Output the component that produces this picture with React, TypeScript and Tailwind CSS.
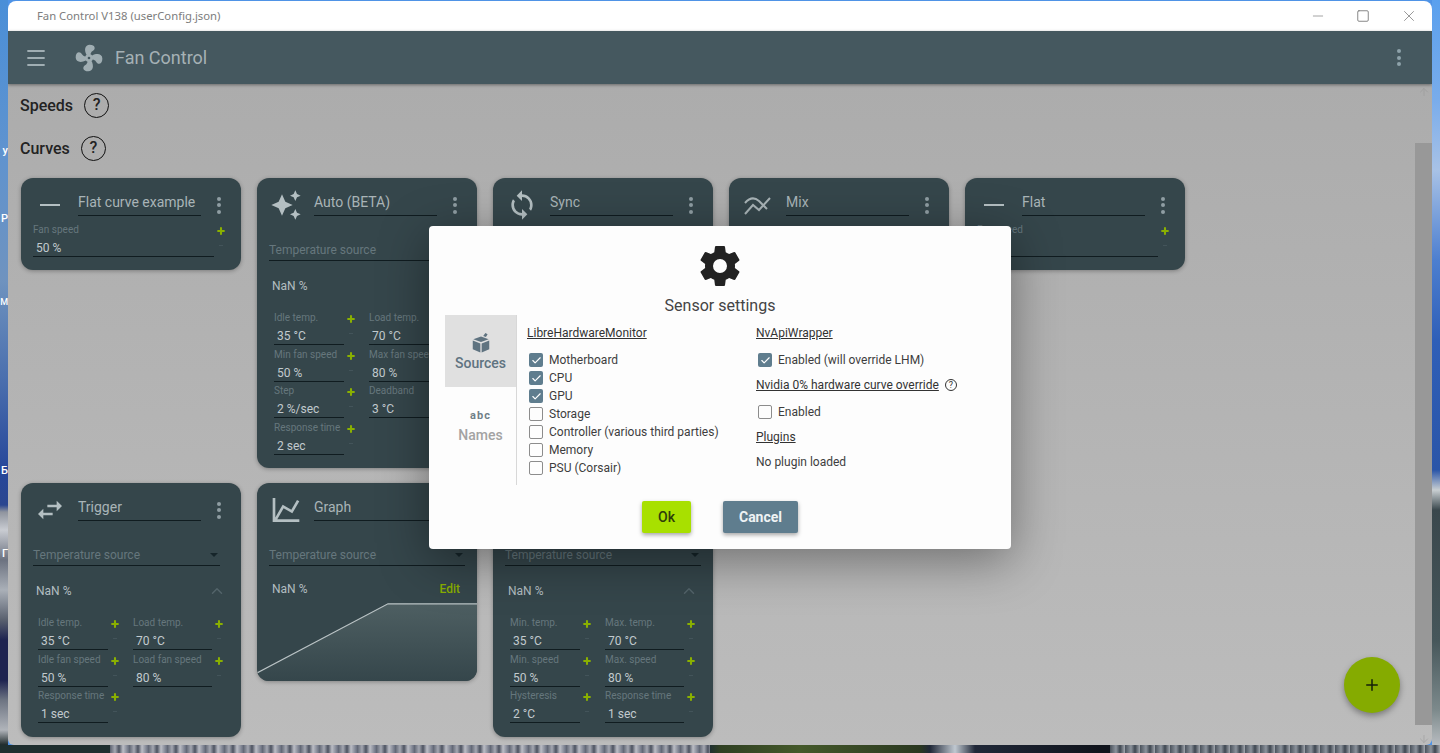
import React from 'react'
import { ArrowDown, ArrowUp, Check, ChevronUp, Menu, Minus, Plus, Square, X } from 'lucide-react'

const FAN =
  'M12,11A1,1 0 0,0 11,12A1,1 0 0,0 12,13A1,1 0 0,0 13,12A1,1 0 0,0 12,11M12.5,2C17,2 17.11,5.57 14.75,6.75C13.76,7.24 13.32,8.29 13.13,9.22C13.61,9.42 14.03,9.73 14.35,10.13C18.05,8.13 22.03,8.92 22.03,12.5C22.03,17 18.46,17.1 17.28,14.73C16.78,13.74 15.72,13.3 14.79,13.11C14.59,13.59 14.28,14 13.88,14.34C15.87,18.03 15.08,22 11.5,22C7,22 6.91,18.42 9.27,17.24C10.25,16.75 10.69,15.71 10.89,14.79C10.4,14.59 9.97,14.27 9.65,13.87C5.96,15.85 2,15.07 2,11.5C2,7 5.56,6.89 6.74,9.26C7.24,10.25 8.29,10.68 9.22,10.87C9.41,10.39 9.73,9.97 10.14,9.65C8.15,5.96 8.94,2 12.5,2Z'
const SPARKLES =
  'M19,1L17.74,3.75L15,5L17.74,6.26L19,9L20.25,6.26L23,5L20.25,3.75M9,4L6.5,9.5L1,12L6.5,14.5L9,20L11.5,14.5L17,12L11.5,9.5M19,15L17.74,17.74L15,19L17.74,20.25L19,23L20.25,20.25L23,19L20.25,17.74'
const SYNC =
  'M12,18A6,6 0 0,1 6,12C6,11 6.25,10.03 6.7,9.2L5.24,7.74C4.46,8.97 4,10.43 4,12A8,8 0 0,0 12,20V23L16,19L12,15M12,4V1L8,5L12,9V6A6,6 0 0,1 18,12C18,13 17.75,13.97 17.3,14.8L18.76,16.26C19.54,15.03 20,13.57 20,12A8,8 0 0,0 12,4Z'
const SWAP = 'M21,9L17,5V8H10V10H17V13M7,11L3,15L7,19V16H14V14H7V11Z'
const CHART = 'M16,11.78L20.24,4.45L21.97,5.45L16.74,14.5L10.23,10.75L5.46,19H22V21H2V3H4V17.54L9.5,8L16,11.78Z'
const GEAR =
  'M12,15.5A3.5,3.5 0 0,1 8.5,12A3.5,3.5 0 0,1 12,8.5A3.5,3.5 0 0,1 15.5,12A3.5,3.5 0 0,1 12,15.5M19.43,12.97C19.47,12.65 19.5,12.33 19.5,12C19.5,11.67 19.47,11.34 19.43,11L21.54,9.37C21.73,9.22 21.78,8.95 21.66,8.73L19.66,5.27C19.54,5.05 19.27,4.96 19.05,5.05L16.56,6.05C16.04,5.66 15.5,5.32 14.87,5.07L14.5,2.42C14.46,2.18 14.25,2 14,2H10C9.75,2 9.54,2.18 9.5,2.42L9.13,5.07C8.5,5.32 7.96,5.66 7.44,6.05L4.95,5.05C4.73,4.96 4.46,5.05 4.34,5.27L2.34,8.73C2.21,8.95 2.27,9.22 2.46,9.37L4.57,11C4.53,11.34 4.5,11.67 4.5,12C4.5,12.33 4.53,12.65 4.57,12.97L2.46,14.63C2.27,14.78 2.21,15.05 2.34,15.27L4.34,18.73C4.46,18.95 4.73,19.03 4.95,18.95L7.44,17.94C7.96,18.34 8.5,18.68 9.13,18.93L9.5,21.58C9.54,21.82 9.75,22 10,22H14C14.25,22 14.46,21.82 14.5,21.58L14.87,18.93C15.5,18.67 16.04,18.34 16.56,17.94L19.05,18.95C19.27,19.03 19.54,18.95 19.66,18.73L21.66,15.27C21.78,15.05 21.73,14.78 21.54,14.63L19.43,12.97Z'

const Mdi = ({ d, className }: { d: string; className: string }) => (
  <svg viewBox="0 0 24 24" className={className} fill="currentColor">
    <path d={d} />
  </svg>
)

const Kebab = ({ className }: { className: string }) => (
  <div className={`flex flex-col gap-[2.5px] ${className}`}>
    <span className="w-[4px] h-[4px] rounded-full bg-current" />
    <span className="w-[4px] h-[4px] rounded-full bg-current" />
    <span className="w-[4px] h-[4px] rounded-full bg-current" />
  </div>
)

const FlatIcon = () => <div className="w-[20px] h-[2.5px] bg-[#b4bfc2]" />

const MixIcon = () => (
  <svg viewBox="0 0 30 22" className="w-[30px] h-[22px] text-[#a9b4b7]" fill="none" stroke="currentColor" strokeWidth="2">
    <path d="M2 9 Q9 1 16 7 L24 15" />
    <path d="M2 20 L10 11 L16 16 L27 4" />
  </svg>
)

const Card = ({
  icon,
  title,
  children,
}: {
  icon: React.ReactNode
  title: string
  children: React.ReactNode
}) => (
  <div className="w-[220px] rounded-[12px] bg-[#35464b] shadow-[0_1px_4px_rgba(0,0,0,0.3)] overflow-hidden">
    <div className="flex items-start h-[46px]">
      <div className="w-[57px] h-[54px] flex items-center justify-center text-[#b4bfc2]">{icon}</div>
      <div className="w-[123px] h-[38px] pt-[14px] border-b border-[#101c20] text-[14px] leading-[20px] text-[#a9b4b7] whitespace-nowrap">
        {title}
      </div>
      <div className="w-[36px] h-[54px] flex items-center justify-center text-[#8f9ea3]">
        <Kebab className="" />
      </div>
    </div>
    {children}
  </div>
)

const Field = ({ label, value, wide, full }: { label: string; value: string; wide?: boolean; full?: boolean }) => (
  <div className="flex h-[36.5px]">
    <div className={full ? 'w-[181px]' : wide ? 'w-[79px]' : 'w-[70px]'}>
      <div className="h-[12px] text-[10px] leading-[12px] text-[#66777d] whitespace-nowrap">{label}</div>
      <div className="h-[21px] pt-[4px] pl-[3px] border-b border-[#101c20] text-[12px] leading-[16px] text-[#c2cace] whitespace-nowrap">
        {value}
      </div>
    </div>
    <div className="w-[14px] flex flex-col items-center">
      <Plus className="w-[10px] h-[10px] mt-[2px] text-[#8ab000]" strokeWidth={5} />
      <span className="mt-[9px] w-[4px] h-px bg-[#43545a]" />
    </div>
  </div>
)

const Select = ({ narrow }: { narrow?: boolean }) => (
  <div className={`ml-[12px] mt-[16px] h-[21px] border-b border-[#101c20] flex items-center justify-between text-[12px] text-[#66777d] ${narrow ? 'mr-[21px]' : 'mr-[12px]'}`}>
    <span>Temperature source</span>
    <span className="mr-[2px] w-0 h-0 border-x-[4px] border-x-transparent border-t-[4px] border-t-[#16252a]" />
  </div>
)

const NanRow = ({ chevron = true }: { chevron?: boolean }) => (
  <div className="mx-[15px] h-[51px] pb-[2px] flex items-center justify-between text-[12px] text-[#b3bdc1]">
    <span>NaN %</span>
    {chevron && <ChevronUp className="w-[18px] h-[18px] text-[#526369]" />}
  </div>
)

const Fields = ({ items }: { items: [string, string][] }) => (
  <div className="ml-[17px] pb-[10px] grid grid-cols-[95px_96px]">
    {items.map(([label, value], i) => (
      <Field key={label} label={label} value={value} wide={i % 2 === 1} />
    ))}
  </div>
)

const Checkbox = ({ label, checked }: { label: string; checked?: boolean }) => (
  <div className="flex items-center h-[18px] ml-[2px] gap-[6px] text-[12px] text-[#3d3d3d]">
    {checked ? (
      <span className="w-[14px] h-[14px] rounded-[2px] bg-[#5f7d8e] flex items-center justify-center">
        <Check className="w-[11px] h-[11px] text-white" strokeWidth={2.5} />
      </span>
    ) : (
      <span className="w-[14px] h-[14px] rounded-[2px] border-[1.5px] border-[#8c8c8c]" />
    )}
    <span>{label}</span>
  </div>
)

const Heading = ({ children, className = '' }: { children: React.ReactNode; className?: string }) => (
  <div className={`h-[16px] text-[12px] leading-[16px] text-[#333] underline ${className}`}>{children}</div>
)

const Dialog = () => (
  <div className="absolute left-[429px] top-[226px] w-[582px] h-[323px] rounded-[4px] bg-[#fdfdfd] shadow-[0_11px_50px_rgba(0,0,0,0.4)] flex flex-col items-center pt-[16px]">
    <Mdi d={GEAR} className="w-[48px] h-[48px] text-[#222]" />
    <div className="mt-[6px] -mb-[1px] h-[20px] text-[16px] leading-[20px] text-[#444]">Sensor settings</div>
    <div className="w-full h-[170px] px-[16px] flex">
      <div className="w-[72px] border-r border-[#d8d8d8]">
        <div className="h-[72px] bg-[#e0e0e0] flex flex-col items-center pt-[17px] text-[#5f7380]">
          <svg viewBox="0 0 20 20" className="w-[22px] h-[22px]" fill="currentColor">
            <path d="M10 4 L17 6.5 L10 9.2 L3 6.5 Z M14 1 L16 2 L14.5 4.5 L12 3.6 Z" />
            <path d="M2.5 7.8 L9.4 10.4 L9.4 18.6 L2.5 15.6 Z M17.5 7.8 L10.6 10.4 L10.6 18.6 L17.5 15.6 Z" />
          </svg>
          <div className="-mt-[1px] text-[14px] leading-[20px] font-medium">Sources</div>
        </div>
        <div className="flex flex-col items-center pt-[18px] text-[#a3a3a3]">
          <div className="h-[20px] pt-[1px] text-[11px] leading-[20px] font-bold tracking-[1px] text-[#707f88]">abc</div>
          <div className="text-[14px] leading-[20px] font-medium">Names</div>
        </div>
      </div>
      <div className="w-[239px] pl-[10px] pt-[10px]">
        <Heading>LibreHardwareMonitor</Heading>
        <div className="mt-[10px]">
          <Checkbox label="Motherboard" checked />
          <Checkbox label="CPU" checked />
          <Checkbox label="GPU" checked />
          <Checkbox label="Storage" />
          <Checkbox label="Controller (various third parties)" />
          <Checkbox label="Memory" />
          <Checkbox label="PSU (Corsair)" />
        </div>
      </div>
      <div className="flex-1 pt-[10px]">
        <Heading>NvApiWrapper</Heading>
        <div className="mt-[10px]">
          <Checkbox label="Enabled (will override LHM)" checked />
        </div>
        <div className="mt-[8px] flex items-center gap-[6px]">
          <Heading>Nvidia 0% hardware curve override</Heading>
          <span className="w-[12px] h-[12px] rounded-full border border-[#333] text-[9px] leading-[10px] text-center text-[#333]">?</span>
        </div>
        <div className="mt-[10px]">
          <Checkbox label="Enabled" />
        </div>
        <Heading className="mt-[8px]">Plugins</Heading>
        <div className="mt-[9px] h-[16px] text-[12px] leading-[16px] text-[#3d3d3d]">No plugin loaded</div>
      </div>
    </div>
    <div className="mt-[16px] flex gap-[32px]">
      <div className="w-[49px] h-[32px] rounded-[2px] bg-[#a8e000] shadow-[0_2px_4px_rgba(0,0,0,0.35)] flex items-center justify-center text-[14px] font-medium text-[#2f3d0a]">
        Ok
      </div>
      <div className="w-[75px] h-[32px] rounded-[2px] bg-[#5f7d8e] shadow-[0_2px_4px_rgba(0,0,0,0.35)] flex items-center justify-center text-[14px] font-bold text-[#eef2f4]">
        Cancel
      </div>
    </div>
  </div>
)

const SectionTitle = ({ title, className }: { title: string; className: string }) => (
  <div className={`h-[26px] flex items-center text-[#232323] ${className}`}>
    <span className="mt-[2px] text-[16px] font-medium">{title}</span>
    <span className="ml-[11px] w-[25px] h-[25px] rounded-full border-[1.5px] border-[#111] flex items-center justify-center text-[16px] font-medium">?</span>
  </div>
)

// desktop icon labels that stick out left of the window
const DesktopLabel = ({ text, className }: { text: string; className: string }) => (
  <span className={`absolute left-0 w-[8px] text-right leading-[12px] font-medium text-white ${className}`}>{text}</span>
)

export default function App() {
  return (
    <div className="relative w-[1440px] h-[753px] overflow-hidden pl-[8px] pt-[1px] [font-family:Roboto,sans-serif] [background:repeating-linear-gradient(90deg,#5c6270_0,#a5a8b2_5px,#4c5260_9px,#bcbec6_13px,#6a7080_19px)_110px_745px/600px_8px_no-repeat,repeating-linear-gradient(90deg,#4a525c_0,#8c939c_6px,#3e4650_10px,#a4a9b0_15px)_1110px_745px/330px_8px_no-repeat,linear-gradient(90deg,#1f2f30_0,#1f2f30_710px,#2f3f22_720px,#44592a_800px,#2a3820_920px,#202838_930px,#c0c8d0_955px,#202838_975px,#10141c_1100px)_left_745px/100%_8px_no-repeat,linear-gradient(to_bottom,#4a8fd8_0,#5f93cf_150px,#6f93bf_280px,#4a6fae_380px,#27479a_470px,#2a4690_505px,#8f949e_512px,#c9ccd2_530px,#6c7280_560px,#aab0b8_590px,#59606e_620px,#1e2350_640px,#1e2350_680px,#6d7482_700px,#b0b4ba_730px,#1f2a2c_745px)_left_top/8px_100%_no-repeat,linear-gradient(to_bottom,#5aa0ee_0,#79aceb_100px,#a8c2e6_170px,#4d7fd0_260px,#2f5fb8_340px,#2a55a8_470px,#c9cfd2_490px,#3a474c_510px,#46565a_640px,#7d8a8c_710px,#b8bcc0_745px)_right_top/8px_100%_no-repeat,#4f93e6]">
      <DesktopLabel text="у" className="top-[145px] text-[11px]" />
      <DesktopLabel text="Р" className="top-[213px] text-[11px]" />
      <DesktopLabel text="М" className="top-[296px] text-[9px]" />
      <DesktopLabel text="Б" className="top-[465px] text-[11px]" />
      <DesktopLabel text="Г" className="top-[548px] text-[11px]" />
      <div className="w-[1424px] h-[744px] rounded-t-[8px] rounded-b-[6px] overflow-hidden flex flex-col">
        <div className="h-[30px] shrink-0 bg-white flex items-center pl-[29px]">
          <span className="[font-family:'Noto_Sans',sans-serif] text-[11.3px] text-[#7d7d7d]">Fan Control V138 (userConfig.json)</span>
          <div className="ml-auto flex items-center text-[#777]">
            <Minus className="w-[16px] h-[16px] mr-[30px]" strokeWidth={1} />
            <Square className="w-[14px] h-[14px] mr-[30px]" strokeWidth={1.5} />
            <X className="w-[18px] h-[18px] mr-[14px]" strokeWidth={1} />
          </div>
        </div>
        <div className="h-[53px] shrink-0 bg-[#45585f] shadow-[0_1px_3px_rgba(0,0,0,0.4)] z-10 flex items-center text-[#a0aeb3]">
          <Menu className="ml-[16px] w-[24px] h-[24px] mt-[1px]" strokeWidth={1.8} />
          <Mdi d={FAN} className="ml-[25px] w-[32px] h-[32px]" />
          <span className="ml-[10px] text-[18px] text-[#a5b1b5]">Fan Control</span>
          <Kebab className="ml-auto mr-[31px] text-[#8ea2aa]" />
        </div>
        <div className="flex-1 flex min-h-0 bg-gradient-to-b from-[#acacac] to-[#bcbcbc]">
          <div className="relative w-[1407px] pl-[12px] overflow-hidden">
            <SectionTitle title="Speeds" className="mt-[8px]" />
            <SectionTitle title="Curves" className="mt-[17px]" />
            <div className="mt-[17px] ml-[1px] flex flex-col gap-[15px]">
              <div className="h-[290px] flex items-start gap-[16px]">
                <Card icon={<FlatIcon />} title="Flat curve example">
                  <div className="ml-[12px] h-[46px]">
                    <Field label="Fan speed" value="50 %" full />
                  </div>
                </Card>
                <Card icon={<Mdi d={SPARKLES} className="w-[32px] h-[32px]" />} title="Auto (BETA)">
                  <Select />
                  <NanRow chevron={false} />
                  <Fields
                    items={[
                      ['Idle temp.', '35 °C'],
                      ['Load temp.', '70 °C'],
                      ['Min fan speed', '50 %'],
                      ['Max fan speed', '80 %'],
                      ['Step', '2 %/sec'],
                      ['Deadband', '3 °C'],
                      ['Response time', '2 sec'],
                    ]}
                  />
                </Card>
                <Card icon={<Mdi d={SYNC} className="w-[32px] h-[32px]" />} title="Sync">
                  <Select />
                </Card>
                <Card icon={<MixIcon />} title="Mix">
                  <Select />
                </Card>
                <Card icon={<FlatIcon />} title="Flat">
                  <div className="ml-[12px] h-[46px]">
                    <Field label="Fan speed" value="50 %" full />
                  </div>
                </Card>
              </div>
              <div className="flex items-start gap-[16px]">
                <Card icon={<Mdi d={SWAP} className="w-[32px] h-[32px]" />} title="Trigger">
                  <Select narrow />
                  <NanRow />
                  <Fields
                    items={[
                      ['Idle temp.', '35 °C'],
                      ['Load temp.', '70 °C'],
                      ['Idle fan speed', '50 %'],
                      ['Load fan speed', '80 %'],
                      ['Response time', '1 sec'],
                    ]}
                  />
                </Card>
                <Card icon={<Mdi d={CHART} className="w-[32px] h-[32px]" />} title="Graph">
                  <Select />
                  <div className="mx-[15px] h-[37px] pt-[15px] flex justify-between text-[12px] leading-[16px]">
                    <span className="text-[#b3bdc1]">NaN %</span>
                    <span className="mr-[2px] text-[#8ab000] font-medium">Edit</span>
                  </div>
                  <svg viewBox="0 0 220 78" className="block w-[220px] h-[78px]">
                    <defs>
                      <linearGradient id="graphFill" x1="0" y1="0" x2="0" y2="1">
                        <stop offset="0" stopColor="#4e5f62" />
                        <stop offset="1" stopColor="#35464b" />
                      </linearGradient>
                    </defs>
                    <path d="M0 70 L131 0.8 L220 0.8 V78 H0 Z" fill="url(#graphFill)" />
                    <path d="M0 70 L131 0.8 L220 0.8" fill="none" stroke="#b9c2c4" strokeWidth="1.2" />
                  </svg>
                </Card>
                <Card icon={<Mdi d={CHART} className="w-[32px] h-[32px]" />} title="Linear">
                  <Select />
                  <NanRow />
                  <Fields
                    items={[
                      ['Min. temp.', '35 °C'],
                      ['Max. temp.', '70 °C'],
                      ['Min. speed', '50 %'],
                      ['Max. speed', '80 %'],
                      ['Hysteresis', '2 °C'],
                      ['Response time', '1 sec'],
                    ]}
                  />
                </Card>
              </div>
            </div>
            <div className="absolute left-[1336px] top-[573px] w-[56px] h-[56px] rounded-full bg-[#85ab00] shadow-[0_3px_6px_rgba(0,0,0,0.35)] flex items-center justify-center">
              <Plus className="w-[18px] h-[18px] text-[#14210a]" strokeWidth={2} />
            </div>
          </div>
          <div className="w-[17px] flex flex-col items-center">
            <div className="h-[59px] w-full pt-[2px] flex justify-center">
              <ArrowUp className="w-[12px] h-[12px] text-[#a0a0a0]" />
            </div>
            <div className="h-[584px] w-full bg-[#989898]" />
            <ArrowDown className="mt-[8px] w-[12px] h-[12px] text-[#a8a8a8]" />
          </div>
        </div>
      </div>
      <Dialog />
    </div>
  )
}
